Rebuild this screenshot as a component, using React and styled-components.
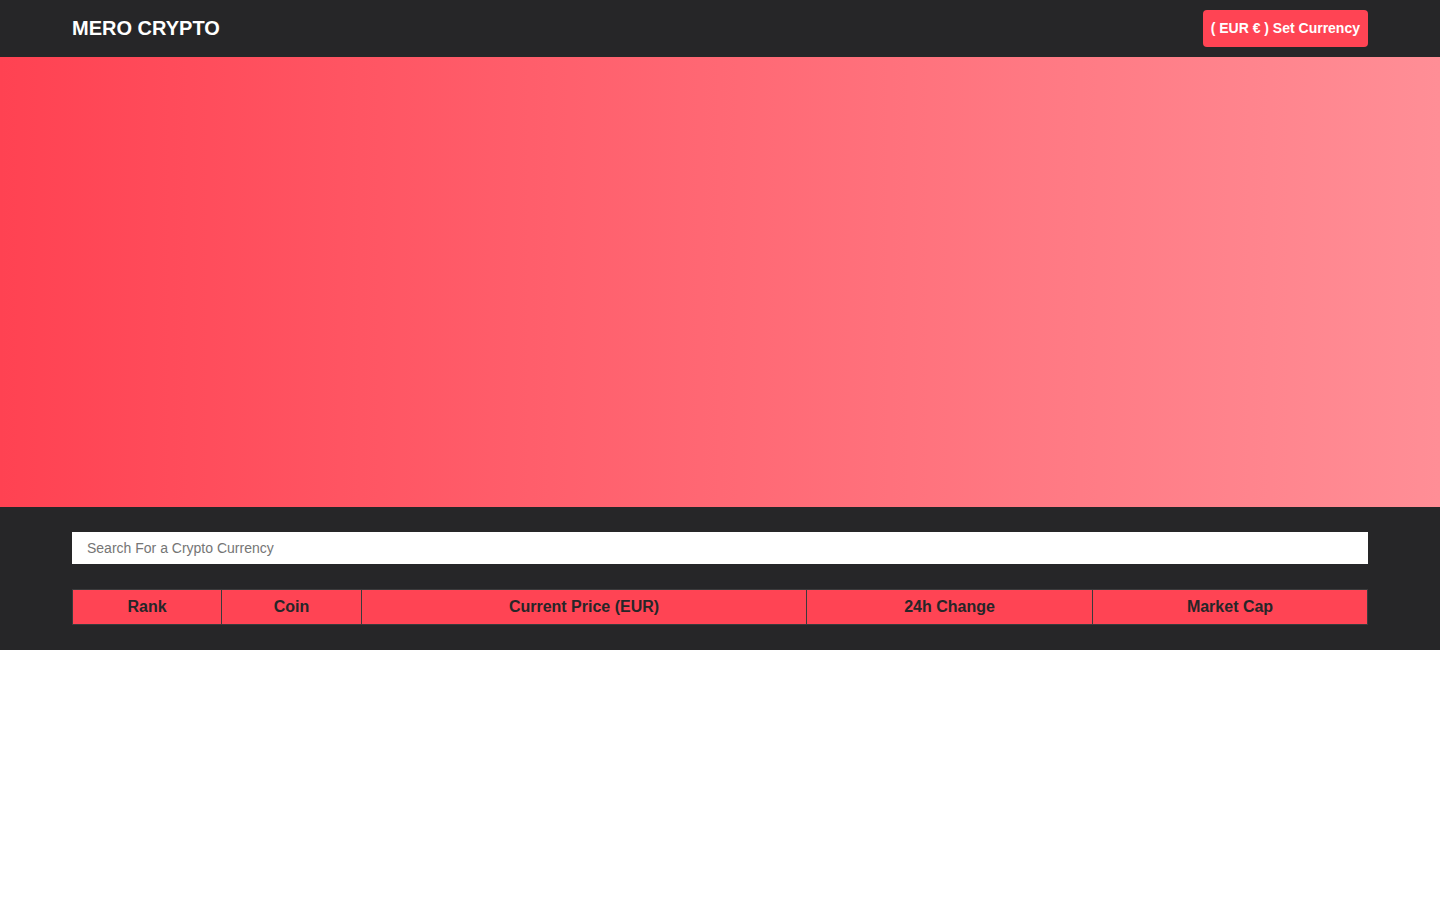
import styled, { createGlobalStyle } from "styled-components";

const GlobalStyle = createGlobalStyle`
  body {
    margin: 0;
    font-family: "Liberation Sans", Arial, sans-serif;
    background: #fff;
  }
  * { box-sizing: border-box; }
`;

const Navbar = styled.header`
  height: 57px;
  background: #262628;
  display: flex;
  align-items: center;
  justify-content: space-between;
  padding: 0 72px;
`;

const Logo = styled.h1`
  margin: 0;
  color: #fff;
  font-size: 20px;
  font-weight: 700;
`;

const CurrencyButton = styled.button`
  height: 37px;
  padding: 0 8px 2px;
  border: none;
  border-radius: 4px;
  background: #ff4454;
  color: #fff;
  font-family: inherit;
  font-size: 14px;
  font-weight: 700;
  cursor: pointer;
`;

const Hero = styled.section`
  height: 450px;
  background: linear-gradient(to right, #ff4252, #ff8e96);
`;

const Market = styled.section`
  background: #262628;
  padding: 25px 72px 25px;
`;

const SearchInput = styled.input`
  display: block;
  width: 100%;
  height: 32px;
  border: none;
  padding: 0 15px;
  font-family: inherit;
  font-size: 14px;
  outline: none;
  &::placeholder { color: #757575; }
`;

const Table = styled.table`
  width: calc(100% - 1px);
  margin-top: 25px;
  border-collapse: collapse;
  table-layout: fixed;
`;

const Th = styled.th`
  height: 35px;
  background: #ff4454;
  color: #262628;
  font-size: 16px;
  font-weight: 700;
  border: 1px solid #3a3a3c;
  text-align: center;
  padding: 0;
`;

const columns = [
  { label: "Rank", width: 149 },
  { label: "Coin", width: 140 },
  { label: "Current Price (EUR)", width: 445 },
  { label: "24h Change", width: 286 },
  { label: "Market Cap", width: 275 },
];

const App = () => {
  return (
    <>
      <GlobalStyle />
      <Navbar>
        <Logo>MERO CRYPTO</Logo>
        <CurrencyButton>( EUR € ) Set Currency</CurrencyButton>
      </Navbar>
      <Hero />
      <Market>
        <SearchInput placeholder="Search For a Crypto Currency" />
        <Table>
          <thead>
            <tr>
              {columns.map((c) => (
                <Th key={c.label} style={{ width: c.width }}>
                  {c.label}
                </Th>
              ))}
            </tr>
          </thead>
        </Table>
      </Market>
    </>
  );
};

export default App;
